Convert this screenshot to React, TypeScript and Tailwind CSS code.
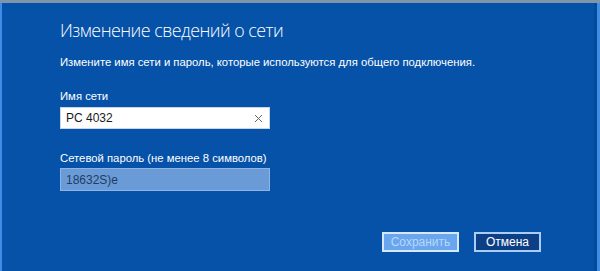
import React from "react";

export default function App() {
  const small = { fontFamily: '"Liberation Sans", Arial, sans-serif' };
  return (
    <div className="w-[600px] h-[271px] flex flex-col bg-[#0652a9] overflow-hidden" style={small}>
      <div className="h-[3px] bg-[#7f95aa] shrink-0" />
      <div className="flex flex-1 min-h-0">
        <div className="w-[2px] bg-[#3f8ce8] shrink-0" />
        <div className="flex-1 flex flex-col pl-[58px] pt-[15px]">
          <h1
            className="text-[17.8px] leading-[24px] font-light text-white tracking-[-0.5px]"
            style={{ fontFamily: '"Open Sans", "Noto Sans", sans-serif' }}
          >
            Изменение сведений о сети
          </h1>
          <p className="mt-[13px] text-[11.3px] leading-[14px] text-white">
            Измените имя сети и пароль, которые используются для общего подключения.
          </p>
          <label className="mt-[20px] text-[11.3px] leading-[14px] text-white">Имя сети</label>
          <div className="mt-[4px] w-[210px] h-[22px] bg-white border border-[#c9d6e6] flex items-center justify-between pl-[5px] pr-[6px]">
            <span className="text-[12px] text-[#1a1a1a]">PC 4032</span>
            <svg width="9" height="9" viewBox="0 0 9 9">
              <path d="M1 1 L8 8 M8 1 L1 8" stroke="#666" strokeWidth="1" />
            </svg>
          </div>
          <label className="mt-[22px] text-[11.3px] leading-[14px] text-white">
            Сетевой пароль (не менее 8 символов)
          </label>
          <div className="mt-[3px] w-[210px] h-[23px] bg-[#6b9bd6] border border-[#8db4e6] flex items-center pl-[5px]">
            <span className="text-[12px] text-[#1f3d66]">18632S)e</span>
          </div>
          <div className="flex-1" />
          <div className="flex gap-[15px] pl-[322px] pb-[19px]">
            <button className="w-[77px] h-[20px] bg-[#69a6ee] border-2 border-[#d6e8ff] text-[12px] leading-none text-[#b8d8fb]">
              Сохранить
            </button>
            <button className="w-[67px] h-[20px] bg-[#0d3f86] border-2 border-[#a9cdf6] text-[12px] leading-none text-white">
              Отмена
            </button>
          </div>
        </div>
        <div className="w-[3px] bg-[#044a9a] shrink-0" />
        <div className="w-[3px] bg-[#3f8ee6] shrink-0" />
      </div>
    </div>
  );
}
